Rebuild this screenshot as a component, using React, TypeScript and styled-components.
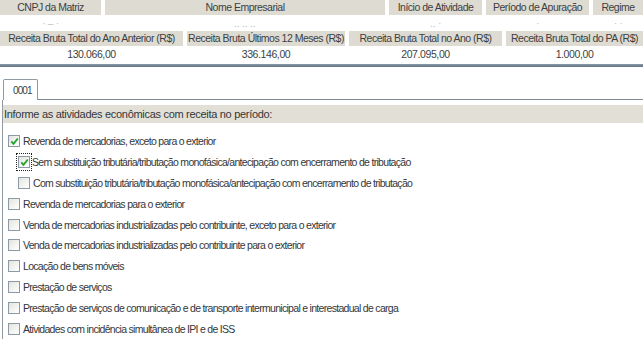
import styled, { createGlobalStyle } from 'styled-components';

const GlobalStyle = createGlobalStyle`
  html, body {
    margin: 0;
    padding: 0;
    background: #ffffff;
  }
  body {
    font-family: "Liberation Sans", Arial, sans-serif;
    font-size: 11px;
    color: #333333;
  }
`;

const Page = styled.div`
  width: 643px;
  height: 339px;
  overflow: hidden;
  background: #ffffff;
`;

const SummaryGrid = styled.div<{ $cols: string }>`
  display: grid;
  grid-template-columns: ${(p) => p.$cols};
  column-gap: 4px;
`;

const HeadCell = styled.div`
  background: #dedbd2;
  color: #3c3f44;
  text-align: center;
  font-size: 10.5px;
  letter-spacing: -0.5px;
  height: 15px;
  line-height: 15px;
  white-space: nowrap;
  overflow: hidden;
`;

const ValueCell = styled.div<{ $faint?: boolean }>`
  text-align: center;
  height: 16px;
  line-height: 16px;
  font-size: 10.5px;
  letter-spacing: -0.4px;
  color: ${(p) => (p.$faint ? '#c4c4c4' : '#3c3f44')};
  white-space: nowrap;
  overflow: hidden;
`;

const Divider = styled.div`
  height: 3px;
  margin-top: 2px;
  background: linear-gradient(#8a9aa8, #5f7486);
`;

const TabArea = styled.div`
  padding: 12px 0 0 2px;
`;

const TabStrip = styled.div`
  display: flex;
  align-items: flex-end;
`;

const Tab = styled.div`
  width: 35px;
  height: 21px;
  margin-left: 1px;
  border: 1px solid #8f9aa3;
  border-bottom: none;
  border-radius: 2px 2px 0 0;
  background: #ffffff;
  font-size: 10px;
  letter-spacing: -0.9px;
  color: #3c3f44;
  padding: 5px 0 0 9px;
  box-sizing: border-box;
`;

const TabLine = styled.div`
  flex: 1;
  border-bottom: 1px solid #7e8c98;
`;

const Panel = styled.div`
  border-left: 1px solid #8f9aa3;
  padding-top: 5px;
`;

const Prompt = styled.div`
  background: #e2e0d6;
  height: 18px;
  line-height: 18px;
  padding-left: 1px;
  font-size: 11px;
  letter-spacing: -0.3px;
  color: #33373b;
`;

const Options = styled.div`
  display: flex;
  flex-direction: column;
  padding-top: 8px;
`;

const Option = styled.label<{ $indent?: boolean }>`
  display: flex;
  align-items: center;
  height: 20.8px;
  padding-left: ${(p) => (p.$indent ? '13px' : '3px')};
  font-size: 10.5px;
  letter-spacing: -0.7px;
  color: #33373b;
  white-space: nowrap;
`;

const BoxWrap = styled.span<{ $focus?: boolean }>`
  display: inline-flex;
  align-items: center;
  justify-content: center;
  width: 16px;
  height: 18px;
  margin-right: ${(p) => (p.$focus ? '0' : '1px')};
  outline: ${(p) => (p.$focus ? '1px dotted #222' : 'none')};
  outline-offset: -1px;
`;

const Box = styled.span`
  width: 10px;
  height: 10px;
  border: 1px solid #8c9aa6;
  background: linear-gradient(135deg, #e4e4de, #ffffff);
  display: inline-flex;
  align-items: center;
  justify-content: center;
`;

const Check = () => (
  <svg width="9" height="9" viewBox="0 0 9 9">
    <path d="M1.3 4.4 L3.5 6.8 L7.8 1.5" fill="none" stroke="#21a32a" strokeWidth="1.8" />
  </svg>
);

const CheckBox = ({ checked, focus }: { checked?: boolean; focus?: boolean }) => (
  <BoxWrap $focus={focus}>
    <Box>{checked && <Check />}</Box>
  </BoxWrap>
);

const options: { text: string; checked?: boolean; indent?: boolean; focus?: boolean }[] = [
  { text: 'Revenda de mercadorias, exceto para o exterior', checked: true },
  {
    text: 'Sem substituição tributária/tributação monofásica/antecipação com encerramento de tributação',
    checked: true,
    indent: true,
    focus: true,
  },
  {
    text: 'Com substituição tributária/tributação monofásica/antecipação com encerramento de tributação',
    indent: true,
  },
  { text: 'Revenda de mercadorias para o exterior' },
  { text: 'Venda de mercadorias industrializadas pelo contribuinte, exceto para o exterior' },
  { text: 'Venda de mercadorias industrializadas pelo contribuinte para o exterior' },
  { text: 'Locação de bens móveis' },
  { text: 'Prestação de serviços' },
  { text: 'Prestação de serviços de comunicação e de transporte intermunicipal e interestadual de carga' },
  { text: 'Atividades com incidência simultânea de IPI e de ISS' },
];

export default function App() {
  return (
    <Page>
      <GlobalStyle />
      <SummaryGrid $cols="101px 280px 93px 103px 1fr">
        <HeadCell>CNPJ da Matriz</HeadCell>
        <HeadCell>Nome Empresarial</HeadCell>
        <HeadCell>Início de Atividade</HeadCell>
        <HeadCell>Período de Apuração</HeadCell>
        <HeadCell>Regime</HeadCell>
        <ValueCell $faint>· ‒ ·</ValueCell>
        <ValueCell $faint>‥ ‥ ‥</ValueCell>
        <ValueCell $faint>‥ ·</ValueCell>
        <ValueCell $faint>·</ValueCell>
        <ValueCell $faint>· ·</ValueCell>
      </SummaryGrid>
      <SummaryGrid $cols="183px 158px 153px 1fr">
        <HeadCell>Receita Bruta Total do Ano Anterior (R$)</HeadCell>
        <HeadCell>Receita Bruta Últimos 12 Meses (R$)</HeadCell>
        <HeadCell>Receita Bruta Total no Ano (R$)</HeadCell>
        <HeadCell>Receita Bruta Total do PA (R$)</HeadCell>
        <ValueCell>130.066,00</ValueCell>
        <ValueCell>336.146,00</ValueCell>
        <ValueCell>207.095,00</ValueCell>
        <ValueCell>1.000,00</ValueCell>
      </SummaryGrid>
      <Divider />
      <TabArea>
        <TabStrip>
          <Tab>0001</Tab>
          <TabLine />
        </TabStrip>
        <Panel>
          <Prompt>Informe as atividades econômicas com receita no período:</Prompt>
          <Options>
            {options.map((o) => (
              <Option key={o.text} $indent={o.indent}>
                <CheckBox checked={o.checked} focus={o.focus} />
                {o.text}
              </Option>
            ))}
          </Options>
        </Panel>
      </TabArea>
    </Page>
  );
}
